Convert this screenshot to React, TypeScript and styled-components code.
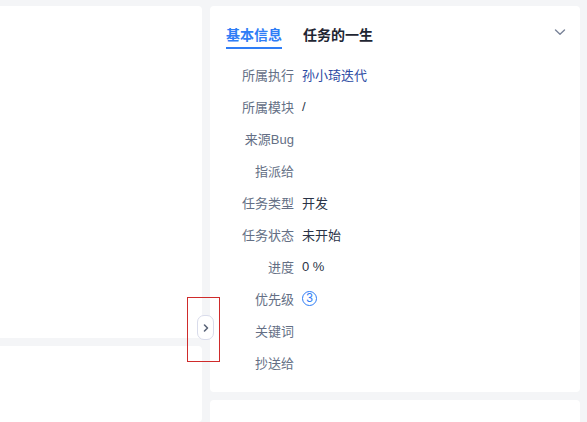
import React from "react";
import styled, { createGlobalStyle } from "styled-components";

const Global = createGlobalStyle`
  html, body { margin: 0; padding: 0; background: #f4f5f7; }
  body { font-family: "Liberation Sans", "Noto Sans CJK SC", sans-serif; overflow: hidden; }
  * { box-sizing: border-box; }
`;

const Page = styled.div`
  position: relative;
  height: 422px;
  overflow: hidden;
  padding: 6px 7px 0 0;
  display: grid;
  grid-template-columns: 202px 370px;
  column-gap: 8px;
`;

const Column = styled.div`
  display: flex;
  flex-direction: column;
  gap: 8px;
  min-height: 0;
`;

const Panel = styled.section<{ $h?: number }>`
  background: #ffffff;
  border-radius: 4px;
  ${(p) => (p.$h ? `height: ${p.$h}px; flex: none;` : `flex: 1;`)}
  padding: 0 16px;
`;

const LeftPanel = styled.section<{ $h?: number }>`
  background: #ffffff;
  border-radius: 0 4px 4px 0;
  ${(p) => (p.$h ? `height: ${p.$h}px; flex: none;` : `flex: 1;`)}
`;

const TabHeader = styled.div<{ $top?: number; $indent?: number }>`
  display: flex;
  align-items: flex-start;
  justify-content: space-between;
  padding-top: ${(p) => p.$top ?? 19}px;
  padding-left: ${(p) => p.$indent ?? 0}px;
`;

const Tabs = styled.div<{ $gap?: number }>`
  display: flex;
  gap: ${(p) => p.$gap ?? 21}px;
`;

const Tab = styled.div<{ $active?: boolean }>`
  font-size: 14px;
  line-height: 20px;
  font-weight: 700;
  color: ${(p) => (p.$active ? "#2f7df6" : "#1f2633")};
  padding-bottom: 2px;
  border-bottom: 2px solid ${(p) => (p.$active ? "#2f7df6" : "transparent")};
`;

const Collapse = styled.div`
  width: 12px;
  height: 12px;
  margin-top: 1px;
  margin-right: -2px;
  color: #7a8499;
  display: flex;
`;

const Fields = styled.div`
  margin-top: 9px;
  display: flex;
  flex-direction: column;
`;

const Row = styled.div`
  display: flex;
  align-items: center;
  height: 32px;
  font-size: 13px;
`;

const Label = styled.div`
  width: 68px;
  text-align: right;
  color: #646f85;
  flex: none;
`;

const Value = styled.div<{ $link?: boolean }>`
  margin-left: 8px;
  color: ${(p) => (p.$link ? "#2c4aa3" : "#2a3346")};
  display: flex;
  align-items: center;
`;

const Pri = styled.span`
  width: 15px;
  height: 15px;
  border: 1px solid #2f7df6;
  border-radius: 50%;
  color: #2f7df6;
  font-size: 12px;
  line-height: 13px;
  text-align: center;
  display: inline-block;
`;

const SideToggle = styled.button`
  position: absolute;
  left: 197px;
  top: 315px;
  width: 17px;
  height: 25px;
  padding: 0;
  background: #ffffff;
  border: 1px solid #d9dceb;
  border-radius: 7px;
  color: #5a6478;
  display: flex;
  align-items: center;
  justify-content: center;
  cursor: pointer;
`;

const Highlight = styled.div`
  position: absolute;
  left: 187px;
  top: 297px;
  width: 33px;
  height: 65px;
  border: 1px solid #cf2b2b;
  pointer-events: none;
`;

const fields: { label: string; value?: React.ReactNode; link?: boolean }[] = [
  { label: "所属执行", value: "孙小琦迭代", link: true },
  { label: "所属模块", value: "/" },
  { label: "来源Bug" },
  { label: "指派给" },
  { label: "任务类型", value: "开发" },
  { label: "任务状态", value: "未开始" },
  { label: "进度", value: "0 %" },
  { label: "优先级", value: <Pri>3</Pri> },
  { label: "关键词" },
  { label: "抄送给" },
];

const Chevron = () => (
  <svg width="12" height="12" viewBox="0 0 12 12" fill="none">
    <path d="M1.5 4 L6 8.2 L10.5 4" stroke="currentColor" strokeWidth="1.4" strokeLinecap="round" strokeLinejoin="round" />
  </svg>
);

export default function App() {
  return (
    <>
      <Global />
      <Page>
        <Column>
          <LeftPanel $h={332} />
          <LeftPanel />
        </Column>
        <Column>
          <Panel $h={386}>
            <TabHeader>
              <Tabs>
                <Tab $active>基本信息</Tab>
                <Tab>任务的一生</Tab>
              </Tabs>
              <Collapse>
                <Chevron />
              </Collapse>
            </TabHeader>
            <Fields>
              {fields.map((f) => (
                <Row key={f.label}>
                  <Label>{f.label}</Label>
                  {f.value !== undefined && <Value $link={f.link}>{f.value}</Value>}
                </Row>
              ))}
            </Fields>
          </Panel>
          <Panel>
            <TabHeader $top={19} $indent={22}>
              <Tabs $gap={27}>
                <Tab $active>描述</Tab>
                <Tab>关联需求</Tab>
              </Tabs>
              <Collapse>
                <Chevron />
              </Collapse>
            </TabHeader>
          </Panel>
        </Column>
        <SideToggle aria-label="展开">
          <svg width="8" height="10" viewBox="0 0 8 10" fill="none">
            <path d="M2.5 2 L5.5 5 L2.5 8" stroke="currentColor" strokeWidth="1.6" strokeLinecap="round" strokeLinejoin="round" />
          </svg>
        </SideToggle>
        <Highlight />
      </Page>
    </>
  );
}
